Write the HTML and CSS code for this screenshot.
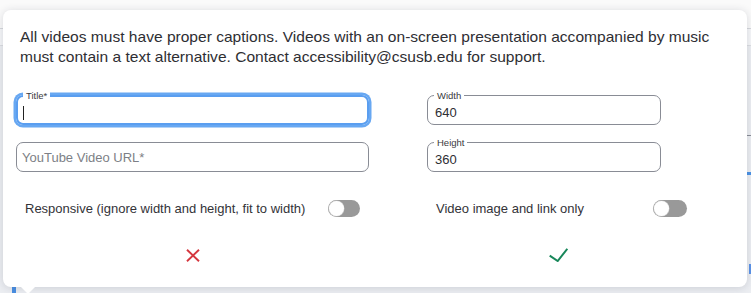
FILE: index.html
```html
<!DOCTYPE html>
<html lang="en">
<head>
<meta charset="utf-8">
<title>Video embed</title>
<link rel="stylesheet" href="styles.css">
</head>
<body>
<div class="editor">
  <div class="toolbar"></div>
  <div class="subbar"></div>
  <div class="canvas">
    <div class="canvas-line"></div>
    <div class="canvas-blue"></div>
    <div class="canvas-link"><span class="glyph-stem"></span></div>
  </div>
  <div class="caret-bar"></div>
</div>

<div class="popover">
  <p class="notice">All videos must have proper captions. Videos with an on-screen presentation accompanied by music must contain a text alternative. Contact accessibility@csusb.edu for support.</p>

  <div class="fields">
    <div class="field field-focus">
      <span class="field-label">Title*</span>
      <span class="caret"></span>
    </div>
    <div class="field">
      <span class="field-label">Width</span>
      <span class="field-value">640</span>
    </div>
    <div class="field field-plain">
      <span class="placeholder">YouTube Video URL*</span>
    </div>
    <div class="field">
      <span class="field-label">Height</span>
      <span class="field-value">360</span>
    </div>
  </div>

  <div class="toggles">
    <div class="toggle-row">
      <span class="toggle-text">Responsive (ignore width and height, fit to width)</span>
      <span class="switch"><span class="knob"></span></span>
    </div>
    <div class="toggle-row">
      <span class="toggle-text">Video image and link only</span>
      <span class="switch"><span class="knob"></span></span>
    </div>
  </div>

  <div class="actions">
    <button class="action cancel" aria-label="Cancel">
      <svg width="14" height="13" viewBox="0 0 14 13"><path d="M1 0.7 L13 12.3 M13 0.7 L1 12.3" stroke="#d5373f" stroke-width="1.9" fill="none"/></svg>
    </button>
    <button class="action confirm" aria-label="Insert">
      <svg width="19" height="14" viewBox="0 0 19 14"><path d="M0.7 7.6 L8.7 13 L18.3 0.8" stroke="#18875a" stroke-width="2" fill="none"/></svg>
    </button>
  </div>
  <span class="arrow"></span>
</div>
</body>
</html>
```

FILE: styles.css
```css
* { box-sizing: border-box; }

html, body {
  margin: 0;
  padding: 0;
}

body {
  width: 751px;
  height: 293px;
  overflow: hidden;
  font-family: "Liberation Sans", Arial, sans-serif;
  background: #eceef2;
  position: relative;
}

.editor {
  display: flex;
  flex-direction: column;
  height: 293px;
}

.toolbar {
  height: 29px;
  background: #fafafa;
  border-bottom: 1px solid #d6d8dc;
}

.subbar {
  height: 17px;
  background: #f6f7f9;
  border-bottom: 1px solid #dcdee2;
}

.canvas {
  flex: 1;
  background: #eceef2;
  display: flex;
  flex-direction: column;
  align-items: flex-end;
}

.canvas-line {
  margin-top: 89px;
  width: 8px;
  height: 1px;
  background: #8a8d96;
}

.canvas-blue {
  margin-top: 36px;
  width: 8px;
  height: 3px;
  background: #4c93e6;
}

.canvas-link {
  margin-top: 89px;
  width: 4px;
  height: 10px;
  display: flex;
  justify-content: flex-end;
}

.glyph-stem {
  width: 2px;
  height: 10px;
  background: #5b93e8;
}

.caret-bar {
  position: absolute;
  left: 12px;
  top: 286px;
  width: 4px;
  height: 7px;
  background: #4a8fe3;
}

.popover {
  position: absolute;
  left: 3px;
  top: 10px;
  width: 744px;
  height: 277px;
  background: #fff;
  border-radius: 8px;
  box-shadow: 0 1px 8px rgba(30, 40, 60, 0.16);
  color: #333;
}

.arrow {
  position: absolute;
  left: 17px;
  bottom: -7px;
  width: 0;
  height: 0;
  border-left: 8px solid transparent;
  border-right: 8px solid transparent;
  border-top: 8px solid #fff;
}

.notice {
  margin: 0;
  padding: 17px 17px 0 17px;
  font-size: 15.55px;
  line-height: 20px;
  color: #2e2e33;
}

.fields {
  display: grid;
  grid-template-columns: 353px 234px;
  column-gap: 58px;
  row-gap: 17px;
  margin: 28px 0 0 13px;
}

.field {
  position: relative;
  height: 30px;
  border: 1px solid #898c95;
  border-radius: 7px;
  display: flex;
  align-items: center;
  padding: 4px 0 0 7px;
}

.field-plain {
  padding: 0 0 0 5px;
}

.field-focus {
  border: 2px solid #5a9ef0;
  box-shadow: 0 0 0 2.5px #68a8f2;
  padding-left: 5px;
}

.field-label {
  position: absolute;
  left: 6px;
  top: -6px;
  padding: 0 3px;
  background: #fff;
  font-size: 9.5px;
  line-height: 11px;
  color: #3a3a40;
}

.field-focus .field-label {
  left: 5px;
  top: -7px;
}

.field-value {
  font-size: 13px;
  color: #2e2e33;
}

.placeholder {
  font-size: 13px;
  color: #7d7f86;
}

.caret {
  width: 1px;
  height: 14px;
  background: #222;
  margin-top: 2px;
}

.toggles {
  display: grid;
  grid-template-columns: 353px 269px;
  column-gap: 58px;
  margin: 28px 0 0 13px;
}

.toggle-row {
  display: flex;
  align-items: center;
  justify-content: space-between;
  padding: 0 9px;
  height: 17px;
}

.toggle-text {
  font-size: 13px;
  color: #333338;
}

.switch {
  position: relative;
  width: 32px;
  height: 17px;
  border-radius: 9px;
  background: #999;
  display: flex;
  align-items: center;
  padding-left: 1px;
}

.toggle-row + .toggle-row .switch {
  width: 34px;
}

.knob {
  width: 15px;
  height: 15px;
  border-radius: 50%;
  background: #fff;
  box-shadow: 0 0 0 0.5px #c8c8c8;
}

.actions {
  display: grid;
  grid-template-columns: 353px 262px;
  column-gap: 58px;
  margin: 26px 0 0 13px;
}

.action {
  justify-self: center;
  height: 24px;
  padding: 0 6px;
  border: 0;
  background: transparent;
  display: flex;
  align-items: center;
  justify-content: center;
  cursor: pointer;
}
```
